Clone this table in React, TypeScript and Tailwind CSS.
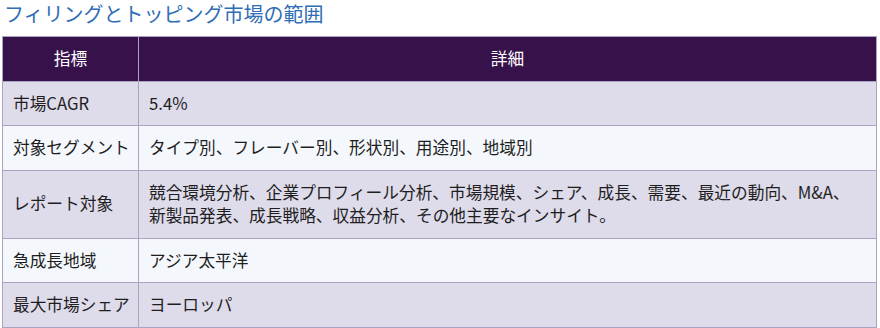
const rows = [
  { label: '市場CAGR', value: '5.4%' },
  { label: '対象セグメント', value: 'タイプ別、フレーバー別、形状別、用途別、地域別' },
  {
    label: 'レポート対象',
    value:
      '競合環境分析、企業プロフィール分析、市場規模、シェア、成長、需要、最近の動向、M&A、新製品発表、成長戦略、収益分析、その他主要なインサイト。',
  },
  { label: '急成長地域', value: 'アジア太平洋' },
  { label: '最大市場シェア', value: 'ヨーロッパ' },
]

export default function App() {
  return (
    <div
      className="w-[880px] h-[328px] bg-white overflow-hidden"
      style={{ fontFamily: '"Noto Sans CJK JP", "Noto Sans", sans-serif' }}
    >
      <h2 className="pl-[4px] pt-[1px] h-[36px] text-[20px] leading-[26px] text-[#2f6db5] font-normal">
        フィリングとトッピング市場の範囲
      </h2>
      <div className="pl-[2px]">
        <table className="w-[875px] border-collapse text-[16.7px] leading-[23.5px] text-[#1e1e1e]">
          <thead>
            <tr className="bg-[#36114a] text-white">
              <th className="w-[136px] border border-[#a9a4c2] py-[10px] font-normal text-center">指標</th>
              <th className="border border-[#a9a4c2] py-[10px] font-normal text-center">詳細</th>
            </tr>
          </thead>
          <tbody>
            {rows.map((r, i) => (
              <tr key={r.label} className={i % 2 === 0 ? 'bg-[#dedbea]' : 'bg-[#f4f8fc]'}>
                <td className="border border-[#a9a4c2] pl-[10px] pr-[8px] py-[10px] align-middle whitespace-nowrap">
                  {r.label}
                </td>
                <td className="border border-[#a9a4c2] px-[10px] py-[10px] align-middle">{r.value}</td>
              </tr>
            ))}
          </tbody>
        </table>
      </div>
    </div>
  )
}
